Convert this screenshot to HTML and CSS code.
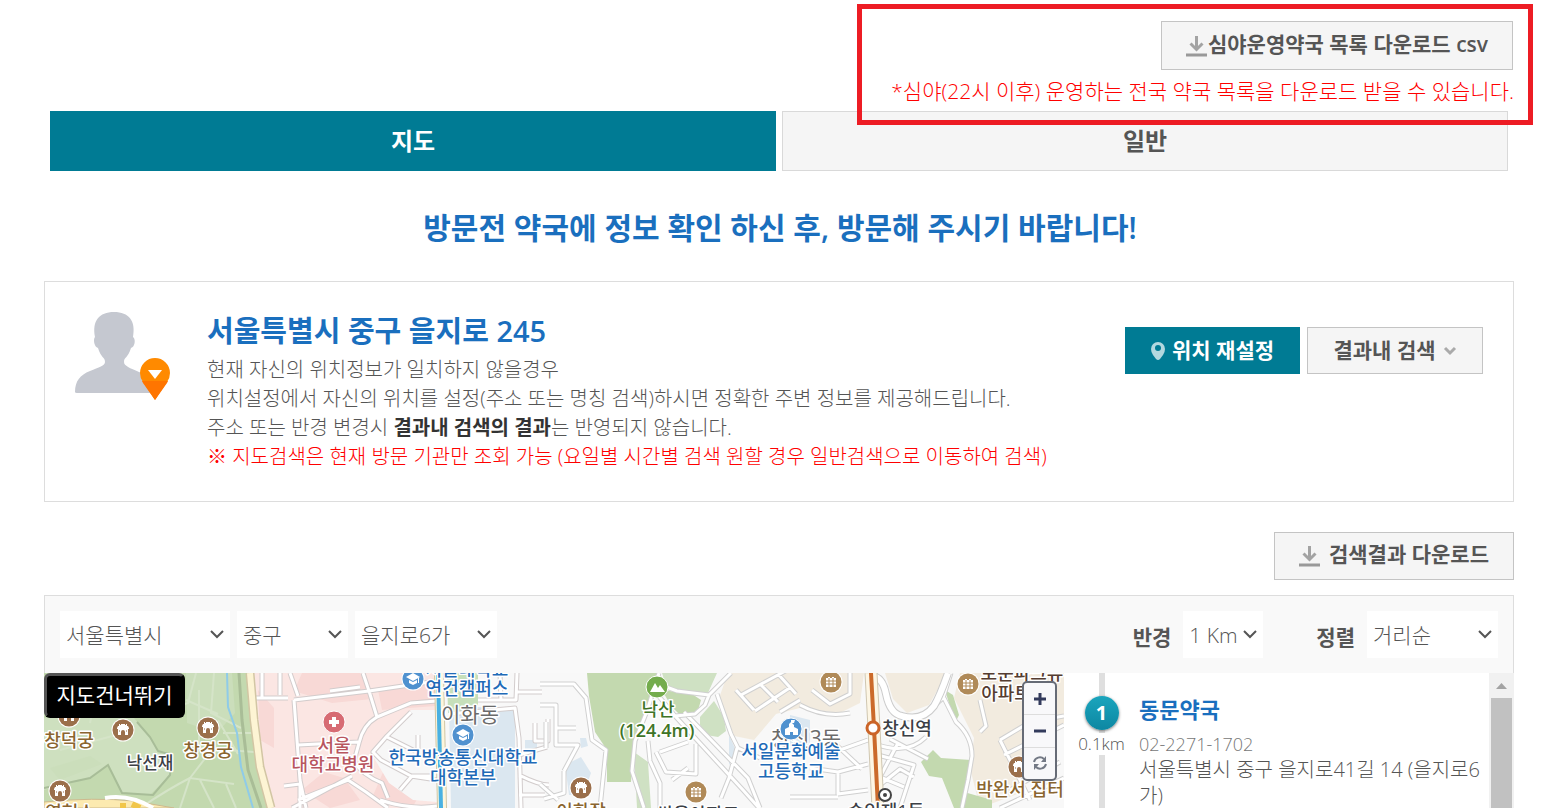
FILE: index.html
```html
<!DOCTYPE html>
<html lang="ko">
<head>
<meta charset="utf-8">
<title>약국 찾기</title>
<link rel="stylesheet" href="styles.css">
</head>
<body>
<svg class="defs" aria-hidden="true">
  <defs>
    <symbol id="chev" viewBox="0 0 16 10"><path d="M2 2l6 6 6-6" fill="none" stroke="currentColor" stroke-width="2"/></symbol>
    <symbol id="down" viewBox="0 0 22 22"><path d="M10.500 1v13M4.500 8.500l6 6 6-6" fill="none" stroke="#a3a3a3" stroke-width="3"/><path d="M0 18.500h21v3H0z" fill="#999"/></symbol>
    <g id="palace"><circle r="11.500" fill="#fff"/><circle r="10.500" fill="#9b6f4b"/><path d="M-6-2l1-2h1v-2h1v1h1v-1h4v1h1v-1h1v2h1l1 2v1h-1V5H2V2a2 2 0 0 0-4 0V5H-5V-1h-1z" fill="#fff"/><path d="M-4 1h1M3 1h1" stroke="#9b6f4b"/></g>
    <g id="apt"><circle r="11.500" fill="#fff"/><circle r="10.500" fill="#b08a58"/><path d="M-5-4h2v-1h2v1h2v-1h2v1h2v9H-5z" fill="#fff"/><path d="M-5-1H5M-5 2H5M-2-4v9M2-4v9" stroke="#b08a58"/></g>
    <g id="univ"><circle r="11.500" fill="#fff"/><circle r="10.500" fill="#4f91cf"/><path d="M-7-2l7-4 7 4-7 4zM-4 1l4 2 4-2v3l-4 2-4-2zM5-1h1v5H5z" fill="#fff"/></g>
  </defs>
</svg>
<main class="page">
  <header class="top">
    <button class="btn csv" type="button"><svg class="i-down" aria-hidden="true"><use href="#down"/></svg>심야운영약국 목록 다운로드 csv</button>
    <p class="note">*심야(22시 이후) 운영하는 전국 약국 목록을 다운로드 받을 수 있습니다.</p>
    <div class="mark"></div>
  </header>
  <nav class="tabs"><a class="tab on" href="#map">지도</a><a class="tab" href="#list">일반</a></nav>
  <h1 class="headline">방문전 약국에 정보 확인 하신 후, 방문해 주시기 바랍니다!</h1>

  <section class="place">
    <svg class="person" viewBox="0 0 96 90" aria-hidden="true">
      <path d="M0 80C0 69 5 63 15 59C24 55 30 54 30 50C30 45 26 46 23 36C19 35 18 27 20 25C17 9 24 0 39 0C54 0 61 9 58 25C61 27 60 35 56 36C53 46 49 45 49 50C49 54 55 56 64 60C74 64 78 70 79 81H2Q0 81 0 80Z" fill="#c5c8d0"/>
      <path d="M80 46a15 15 0 0 0-15 15q0 5 3 9l12 18 12-18q3-4 3-9a15 15 0 0 0-15-15z" fill="#ff8a00"/>
      <path d="M67 69h26l-1 2-12 17-12-17z" fill="#ff7500"/><path d="M73 58h14l-7 9z" fill="#fff"/>
    </svg>
    <div class="info">
      <h2 class="addr">서울특별시 중구 을지로 245</h2>
      <p class="line">현재 자신의 위치정보가 일치하지 않을경우</p>
      <p class="line">위치설정에서 자신의 위치를 설정(주소 또는 명칭 검색)하시면 정확한 주변 정보를 제공해드립니다.</p>
      <p class="line">주소 또는 반경 변경시 <strong>결과내 검색의 결과</strong>는 반영되지 않습니다.</p>
      <p class="line warn">※ 지도검색은 현재 방문 기관만 조회 가능 (요일별 시간별 검색 원할 경우 일반검색으로 이동하여 검색)</p>
    </div>
    <div class="acts">
      <button class="btn teal" type="button"><svg class="i-pin" viewBox="0 0 14 18" aria-hidden="true"><path d="M7 0a7 7 0 0 0-7 7q0 3 2 6l3 4q2 2 4 0l3-4q2-3 2-6a7 7 0 0 0-7-7z" fill="#b2d8df"/><circle cx="7" cy="6" r="3" fill="#007b94"/></svg>위치 재설정</button>
      <button class="btn" type="button">결과내 검색<svg class="i-small" viewBox="0 0 14 10" aria-hidden="true"><path d="M2 2l5 5 5-5" fill="none" stroke="#aaa" stroke-width="3"/></svg></button>
    </div>
  </section>

  <div class="dl"><button class="btn result" type="button"><svg class="i-down" aria-hidden="true"><use href="#down"/></svg>검색결과 다운로드</button></div>

  <section class="finder">
    <form class="filters">
      <span class="sel w-city"><select aria-label="시도"><option>서울특별시</option></select><svg class="chev"><use href="#chev"/></svg></span>
      <span class="sel w-gu"><select aria-label="시군구"><option>중구</option></select><svg class="chev"><use href="#chev"/></svg></span>
      <span class="sel w-dong"><select aria-label="읍면동"><option>을지로6가</option></select><svg class="chev"><use href="#chev"/></svg></span>
      <label class="lab first" for="radius">반경</label>
      <span class="sel w-km"><select id="radius"><option>1 Km</option></select><svg class="chev"><use href="#chev"/></svg></span>
      <label class="lab second" for="sort">정렬</label>
      <span class="sel w-sort"><select id="sort"><option>거리순</option></select><svg class="chev"><use href="#chev"/></svg></span>
    </form>
    <div class="body">
      <div class="map" id="map">
        <svg class="canvas" viewBox="44 673 1020 135" preserveAspectRatio="xMinYMin slice">
          <path d="M44 673h1020v135H44z" fill="#f8f8f8"/>
          <path d="M44 673H250L254 720 260 767 270 808H44z" fill="#c3d9af"/>
          <path d="M44 718H134L150 737 158 753 170 755 170 775 150 795 122 792 108 765 90 778 44 790z" fill="#cee0bf"/>
          <path d="M186 673h46l3 40-18 20-30-10zM50 768l40-12 12 8-42 16z" fill="#cbdebb"/>
          <path d="M140 808q30-20 50-30l20-26M180 808l10-30 44 6M196 673l-8 30-30 10M214 673l-3 40 30 15M186 700l32 14M199 690v60M218 720l20 34M223 733h30M200 748l54 4M100 673l-10 50M60 750l60-16M200 780l14 28M226 784l10 24M150 673l30 14" fill="none" stroke="#d5e4c8" stroke-width="2"/>
          <path d="M137 722l13 15 8 14 14 4-2 20-17 20-31-2-14-28-18 13-46 10" fill="none" stroke="#a8bd98" stroke-width="2"/>
          <path d="M227 673l1 34 9 26 4 34 12 41" fill="none" stroke="#8fcbe8" stroke-width="2"/>
          <path d="M239 673l3 47 6 50 13 38" fill="none" stroke="#a9bd97" stroke-width="3"/>
          <path d="M44 802q50-5 90-1l40 7H44z" fill="#fceab0" stroke="#cdb98e"/>
          <path d="M120 806h6M132 804l8 4" stroke="#f1c64a" stroke-width="6"/><path d="M105 798q25-4 48 10" fill="none" stroke="#fff" stroke-width="4"/>
          <path d="M254 673H437V808H272L262 767 256 720z" fill="#fbe6e3"/>
          <path d="M302 673h58l12 26-40 4-38-12zM378 690l58-12v28l-54 4zM258 690l16 18v40l-14-8zM302 790l22-18 20 6 16 22-30 8zM384 770l36 24-8 14-40-10z" fill="#f8d9d6"/>
          <path d="M437 710H411l-24 25-16 18 18 30 24 17 24 2z" fill="#f7f7f7"/>
          <path d="M449 707h66v101h-64zM525 740h12v12h-12z" fill="#dbe7f0"/><path d="M447 673h31v32l-18 8h-12z" fill="#c6dfba"/>
          <g fill="none" stroke-linejoin="round">
            <path d="M256 698h32M262 673v24M280 673v22M294 700l6 80 6 28M294 700l75-9 68-10M369 691l-6-18M298 696l-8-23M330 691l30-4M369 691l8 26q-14 8-18 26l-5 18q8 14 28 22l6 15M377 717l34-14 26-2M298 745l60-3M284 786l16-2v24M298 800l50-20 18 12 22 16M292 808l60-32M411 712l-24 24-14 16 8 8 30 16 26 4M387 737l28 14M400 790l12-14h20M418 735v14M380 800q30 10 57 6M478 700h38l1-27M500 673l1 28M516 692h26M449 714l66-6 4 30 2 70M535 723v18h13v-22M519 755l28-8M519 775q20 10 30 10M519 795h26" stroke="#d2cccc" stroke-width="5"/>
            <path d="M256 698h32M262 673v24M280 673v22M294 700l6 80 6 28M294 700l75-9 68-10M369 691l-6-18M298 696l-8-23M330 691l30-4M369 691l8 26q-14 8-18 26l-5 18q8 14 28 22l6 15M377 717l34-14 26-2M298 745l60-3M284 786l16-2v24M298 800l50-20 18 12 22 16M292 808l60-32M411 712l-24 24-14 16 8 8 30 16 26 4M387 737l28 14M400 790l12-14h20M418 735v14M380 800q30 10 57 6M478 700h38l1-27M500 673l1 28M516 692h26M449 714l66-6 4 30 2 70M535 723v18h13v-22M519 755l28-8M519 775q20 10 30 10M519 795h26" stroke="#fff" stroke-width="3"/>
          </g>
          <path d="M250 673l4 47 6 47 11 41" fill="none" stroke="#d2c6a4" stroke-width="9"/><path d="M250 673l4 47 6 47 11 41" fill="none" stroke="#fdf4d4" stroke-width="6"/>
          <path d="M439 673l3 135" stroke="#cfc6a5" stroke-width="10"/><path d="M439 673l3 135" stroke="#fdf6dc" stroke-width="8"/><path d="M438 673l3 135" stroke="#49b1e2" stroke-width="4"/>

          <path d="M587 673h72l-6 28-12 30-8 20-2 31H607V750l-12-18-6-36z" fill="#c3d9af"/>
          <path d="M662 690l30 4 9 6-4 14-16 2-10-10z" fill="#c3d9af"/>
          <path d="M662 673h55l-10 22-40-6zM700 717l14-16 10 16 2 14-8 6-12-2-6-10zM634 752l14 10 3 46h-14z" fill="#cfe1c3"/>
          <path d="M565 765l16-8 10 16-8 22h-14zM580 738h6l2 8-7 2zM729 735l8 18-8 12zM790 715l20 5v26h-20z" fill="#dbe7f0"/>
          <path d="M728 673h136l-4 30-20 10-40-5-24 6-22 26-20-4-15-38zM885 673h62l-18 32-22 8-14-14z" fill="#f2ebdf"/>
          <path d="M960 673h104v50l-24 20-20 30v20l-40 15-10-40 4-30-20-40z" fill="#f2ebdf"/>
          <path d="M933 750l8 8 30 2-3 20-4 12 28 8v8h-38l-12-30-13-2-8-14zM945 690l8 5 6 20-4 8z" fill="#c3d9af"/>
          <g fill="none" stroke-linejoin="round">
            <path d="M540 684h34l12 14 6 42 14 10-6 58M540 705h16v40h22l-14 26M556 728h20M546 722v26M564 771v22l-20 6M540 784l18 16M659 673l-12 38-12 30-3 30 12 37M648 741l2 20 10 22v25M661 685l16 6 32 4 22-22M709 695l-4 10-10 9-20 2-18-22M675 716l22 24 46 50 16 18M684 712l64 66 12 30M660 752l28-10M656 752l10 20 30 2v-30M672 780l16-12M717 694l14 40 7 14 22 10M737 748l-8 30-8 20M741 695l48-26M755 711l36-24M736 690l18 20M760 684l18 18M778 674l18 20M780 712l20-12M850 713q-26 5-50-8M812 690l18 14 20-10v-21M951 673l-8 25-10 9M944 698l12 24q16 14 16 34l-4 24-6 28M878 745q30 10 48-8M878 755l36 10-14 43M890 739l38 20M898 743l-18 34 24 10M880 785l20-16 14 8M840 750l28-10M810 768l28 4 30-8M838 772v22l30-4M790 797h48M830 739l32 30M980 700l6 26-6 6M1000 740l30-18 34-6M1004 755l60-30M1010 790l50-28M1000 740l30 60M1000 808l64-30" stroke="#d0d0d0" stroke-width="5"/>
            <path d="M540 684h34l12 14 6 42 14 10-6 58M540 705h16v40h22l-14 26M556 728h20M546 722v26M564 771v22l-20 6M540 784l18 16M659 673l-12 38-12 30-3 30 12 37M648 741l2 20 10 22v25M661 685l16 6 32 4 22-22M709 695l-4 10-10 9-20 2-18-22M675 716l22 24 46 50 16 18M684 712l64 66 12 30M660 752l28-10M656 752l10 20 30 2v-30M672 780l16-12M717 694l14 40 7 14 22 10M737 748l-8 30-8 20M741 695l48-26M755 711l36-24M736 690l18 20M760 684l18 18M778 674l18 20M780 712l20-12M850 713q-26 5-50-8M812 690l18 14 20-10v-21M951 673l-8 25-10 9M944 698l12 24q16 14 16 34l-4 24-6 28M878 745q30 10 48-8M878 755l36 10-14 43M890 739l38 20M898 743l-18 34 24 10M880 785l20-16 14 8M840 750l28-10M810 768l28 4 30-8M838 772v22l30-4M790 797h48M830 739l32 30M980 700l6 26-6 6M1000 740l30-18 34-6M1004 755l60-30M1010 790l50-28M1000 740l30 60M1000 808l64-30" stroke="#fff" stroke-width="3"/>
            <path d="M868 676q14-2 18 18t16 22q20 6 32-10 6-10 14-33" stroke="#ccc" stroke-width="8"/><path d="M868 676q14-2 18 18t16 22q20 6 32-10 6-10 14-33" stroke="#fff" stroke-width="6"/>
            <path d="M871 673l3 55 4 80" stroke="#cfc6b0" stroke-width="13"/><path d="M871 673l3 55 4 80" stroke="#fdf6e4" stroke-width="11"/><path d="M871 673l3 55 4 80" stroke="#cb6a2a" stroke-width="4"/>
          </g>
          <circle cx="873" cy="728" r="6" fill="#fff" stroke="#cb6427" stroke-width="3"/>
          <g class="t gray"><text class="big" x="470" y="722">이화동</text><text class="big" x="806" y="746">창신3동</text></g>
          <use href="#palace" x="69" y="716"/><use href="#palace" x="123" y="730"/><use href="#palace" x="208" y="728"/><use href="#palace" x="60" y="791"/><use href="#palace" x="581" y="788"/><use href="#palace" x="1019" y="767"/>
          <use href="#apt" x="696" y="792"/><use href="#apt" x="831" y="682"/><use href="#apt" x="968" y="684"/>
          <use href="#univ" x="413" y="679"/><use href="#univ" x="463" y="735"/>
          <circle cx="334" cy="722" r="11" fill="#d76b73" stroke="#fff"/><path d="M329 722h10M334 717v10" stroke="#fff" stroke-width="4"/>
          <circle cx="657" cy="687" r="11" fill="#74ac4d" stroke="#fff"/><path d="M650 692l5-9 3 5 2-3 5 7z" fill="#fff"/>
          <circle cx="791" cy="729" r="11" fill="#4f91cf" stroke="#fff"/><path d="M785 735v-6l4-2v-3l2-2v-2h4l-1 3h-2l2 2v2l4 2v6h-5v-3h-3v3z" fill="#fff"/>
          <g class="t brown"><text x="69" y="747">창덕궁</text><text x="208" y="757">창경궁</text><text x="70" y="819">영현소</text><text x="581" y="818">이화장</text><text x="1020" y="796">박완서 집터</text></g>
          <g class="t dark"><text class="small" x="150" y="769">낙선재</text><text x="907" y="735">창신역</text><text x="886" y="818">숭인제1동</text><text x="698" y="821">쌍용아파트</text></g>
          <circle cx="885" cy="795" r="6" fill="#fff" stroke="#444" stroke-width="2"/><circle cx="885" cy="795" r="2" fill="#444"/>
          <g class="t red"><text x="334" y="752">서울</text><text x="333" y="771">대학교병원</text></g>
          <g class="t blue"><text x="467" y="676">서울대학교</text><text x="467" y="695">연건캠퍼스</text><text x="463" y="764">한국방송통신대학교</text><text x="463" y="784">대학본부</text><text x="791" y="758">서일문화예술</text><text x="791" y="778">고등학교</text></g>
          <g class="t green"><text x="658" y="716">낙산</text><text class="alt" x="657" y="737">(124.4m)</text></g>
          <g class="t bark"><text x="1022" y="680">보문파크뷰</text><text x="1006" y="700">아파트</text></g>
        </svg>
        <a class="skip" href="#list">지도건너뛰기</a>
        <div class="zoom">
          <button type="button" aria-label="확대"><svg viewBox="0 0 14 14"><path d="M1 7h12M7 1v12" stroke="#333b5c" stroke-width="3"/></svg></button>
          <button type="button" aria-label="축소"><svg viewBox="0 0 14 14"><path d="M1 7h12" stroke="#333b5c" stroke-width="3"/></svg></button>
          <button type="button" aria-label="새로고침"><svg viewBox="0 0 14 14"><path d="M1 6a6 6 0 0 1 10-3M13 8a6 6 0 0 1-10 3" fill="none" stroke="#737985" stroke-width="2"/><path d="M13 0v6H8zM1 14V8h5z" fill="#737985"/></svg></button>
        </div>
      </div>
      <div class="list" id="list">
        <div class="rail"><span class="num">1</span><span class="km">0.1km</span></div>
        <div class="item"><h3 class="name"><a href="#p1">동문약국</a></h3><p class="tel">02-2271-1702</p><p class="loc">서울특별시 중구 을지로41길 14 (을지로6가)</p></div>
        <div class="bar" aria-hidden="true"><svg class="up" viewBox="0 0 11 6"><path d="M0 6l5.500-6L11 6z" fill="#a3a3a3"/></svg><div class="thumb"></div></div>
      </div>
    </div>
  </section>
</main>
</body>
</html>
```
FILE: styles.css
```css
* { box-sizing: border-box; }
body { margin: 0; background: #fff; color: #555; font-family: "Open Sans", "Noto Sans CJK KR", sans-serif; font-weight: 300; }
h1, h2, h3, p { margin: 0; }
a { color: inherit; text-decoration: none; }
button, select { font: inherit; color: inherit; }
.defs { position: absolute; width: 0; height: 0; }
.page { height: 100vh; overflow: hidden; display: flex; flex-direction: column; padding: 0 28px 0 44px; }
.top { position: relative; display: flex; flex-direction: column; align-items: flex-end; height: 111px; padding-top: 21px; flex: none; }
.mark { position: absolute; top: 4px; right: -19px; width: 676px; height: 121px; border: 5px solid #ed1c24; z-index: 2; }
.btn { display: flex; align-items: center; justify-content: center; height: 48px; padding: 0 24px 6px; border: 1px solid #c4c4c4; background: #f5f5f5; font-size: 21px; font-weight: 600; white-space: nowrap; }
.csv { height: 49px; margin-right: 1px; }
.i-down { width: 22px; height: 22px; flex: none; position: relative; top: 3px; }
.note { margin-top: 6px; color: #f00; font-size: 21px; line-height: 30px; white-space: nowrap; }
.tabs { display: flex; gap: 6px; padding: 0 6px; flex: none; }
.tab { flex: 1; height: 60px; border: 1px solid #d9d9d9; background: #f5f5f5; font-size: 24px; font-weight: 600; line-height: 58px; text-align: center; }
.on { background: #007b94; border-color: #007b94; color: #fff; }
.headline { margin-top: 35px; font-size: 30px; line-height: 44px; font-weight: 600; color: #1a6fbe; text-align: center; padding-left: 2px; flex: none; }
.place { display: flex; margin-top: 31px; height: 221px; border: 1px solid #ddd; padding: 30px 30px 0; flex: none; }
.person { width: 96px; height: 90px; flex: none; }
.info { flex: 1; min-width: 0; padding-left: 36px; white-space: nowrap; }
.addr { font-size: 29px; font-weight: 600; line-height: 38px; color: #1a6fbe; margin-bottom: 5px; }
.line { font-size: 20px; line-height: 29px; }
.line strong { font-weight: 700; color: #333; }
.warn { color: #f00; }
.acts { display: flex; gap: 7px; align-items: flex-start; padding-top: 15px; }
.acts .btn { width: 176px; height: 47px; padding: 0 0 4px; gap: 7px; }
.acts .teal { width: 175px; background: #007b94; border-color: #007b94; color: #fff; }
.i-pin, .i-small { width: 14px; height: 18px; position: relative; top: 2px; }
.dl { display: flex; justify-content: flex-end; margin: 30px 0 15px; flex: none; }
.result { gap: 8px; }
.finder { flex: 1; min-height: 0; display: flex; flex-direction: column; }
.filters { height: 78px; flex: none; display: flex; align-items: center; gap: 7px; padding: 0 15px; background: #f9f9f9; border: 1px solid #ddd; border-bottom: 0; font-size: 21px; }
.sel { position: relative; height: 47px; background: #fff; }
.sel select { appearance: none; width: 100%; height: 47px; padding: 0 0 0 6px; border: 0; background: transparent; }
.chev { position: absolute; right: 5px; top: 18px; width: 16px; height: 10px; pointer-events: none; }
.w-city { width: 170px; } .w-gu { width: 111px; } .w-dong { width: 142px; } .w-km { width: 80px; } .w-sort { width: 131px; }
.lab { font-weight: 700; padding: 2px 5px 0 0; }
.first { margin-left: auto; }
.second { margin-left: 46px; }
.body { flex: 1; min-height: 0; display: grid; grid-template-columns: minmax(0, 1020fr) minmax(0, 450fr); }
.map { position: relative; overflow: hidden; }
.canvas { display: block; width: 100%; height: 100%; }
.t { text-anchor: middle; font-size: 18px; font-weight: 500; paint-order: stroke; stroke: #fff; stroke-width: 3px; stroke-linejoin: round; }
.small { font-size: 17px; }
.big { font-size: 21px; font-weight: 400; }
.alt { font-size: 18px; font-weight: 600; }
.gray { fill: #6b6b6b; } .brown { fill: #8a6530; } .dark { fill: #3c4046; } .red { fill: #b8565f; } .blue { fill: #1f6bb8; } .green { fill: #3e7427; } .bark { fill: #553c30; }
.skip { position: absolute; left: 0; top: 0; width: 141px; height: 45px; background: #000; color: #fff; border: 3px solid #000; border-top-color: #555; border-left-color: #555; border-radius: 6px; font-size: 21px; font-weight: 400; line-height: 38px; text-align: center; }
.zoom { position: absolute; right: 7px; top: 8px; width: 35px; height: 100px; background: #f8f8fa; border: 2px solid #666b76; border-radius: 5px; display: flex; flex-direction: column; }
.zoom button { flex: 1; padding: 0; border: 0; border-bottom: 1px solid #ddd; background: transparent; display: grid; place-items: center; }
.zoom button:last-child { border-bottom: 0; }
.zoom svg { width: 14px; height: 14px; }
.list { display: flex; overflow: hidden; }
.rail { width: 75px; flex: none; display: flex; flex-direction: column; align-items: center; padding-top: 23px; background: linear-gradient(#dfdfdf, #dfdfdf) center / 6px 100% no-repeat; }
.num { width: 34px; height: 34px; border-radius: 50%; background: linear-gradient(#1ba5bd, #0d87a2); box-shadow: 0 1px 3px #777; color: #fff; font-size: 20px; font-weight: 700; line-height: 33px; text-align: center; }
.km { margin-top: 3px; background: #fff; font-size: 17px; line-height: 22px; }
.item { flex: 1; min-width: 0; padding: 21px 4px 0 0; }
.name { font-size: 22px; font-weight: 600; line-height: 30px; color: #1a6fbe; }
.tel { margin-top: 7px; font-size: 18px; line-height: 26px; color: #777; }
.loc { font-size: 20px; line-height: 26px; word-break: break-all; }
.bar { width: 25px; flex: none; background: #f1f1f1; display: flex; flex-direction: column; align-items: center; padding-top: 10px; }
.up { width: 11px; height: 6px; flex: none; }
.thumb { flex: 1; width: 21px; margin-top: 9px; background: #c1c1c1; }
```
